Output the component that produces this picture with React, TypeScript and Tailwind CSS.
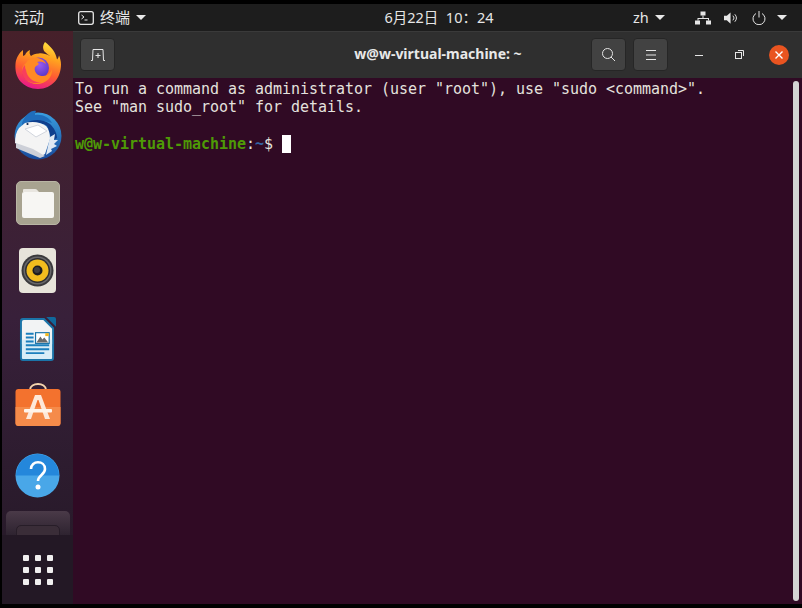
import React from 'react';

const Firefox = () => (
  <svg width="46" height="48" viewBox="0 0 46 48">
    <defs>
      <linearGradient id="ff1" x1="0.7" y1="0" x2="0.4" y2="1">
        <stop offset="0" stopColor="#ffe040" />
        <stop offset="0.3" stopColor="#ffa51f" />
        <stop offset="0.65" stopColor="#ff5a33" />
        <stop offset="1" stopColor="#e8188c" />
      </linearGradient>
      <radialGradient id="ff2" cx="0.55" cy="0.35" r="0.7">
        <stop offset="0" stopColor="#9a5cf0" />
        <stop offset="1" stopColor="#4b2fc0" />
      </radialGradient>
    </defs>
    <path d="M30 1c-3 4-2 8 0 10 2 2 4 3 5 4-4-2-8-3-11-2.500-4 .3-6 1-8 2.500-1-1-2-3-1-6-3 1-4 3-5 5l-2 1C8 13 8 11 8 9 4 12 1 17 .5 23c-.5 7 1 13 5 17.500C9.500 45 16 48 23 48c7 0 13-3 17-7.500 4-4.500 6-11 6-17 0-3-1-7-2-9-.5 2-1 3-2 4-1-7-6-13-12-17.500z" fill="url(#ff1)" />
    <circle cx="23.500" cy="27" r="10.500" fill="url(#ff2)" />
    <path d="M11 22c2-4 7-6 12-5 4 1 7 3 8 6-3-3-7-3-9-2 2 1 2 2 1 3-3 1-4 3-3 6 1 3 4 5 8 5 4 0 8-3 9-7 1 8-6 15-15 15-9 0-15-7-15-14 0-2 1-5 4-7z" fill="#ff8a24" />
    <path d="M11 29c1 8 8 13 15 12-6 3-18 0-19-10 0-3 1-5 3-7 0 2 0 3 1 5z" fill="#f5266f" opacity="0.75" />
  </svg>
);

const Thunderbird = () => (
  <svg width="48" height="50" viewBox="0 0 48 50">
    <defs>
      <linearGradient id="tb1" x1="0.5" y1="0" x2="0.5" y2="1">
        <stop offset="0" stopColor="#3a9fe0" />
        <stop offset="1" stopColor="#174a9c" />
      </linearGradient>
    </defs>
    <circle cx="24" cy="26" r="23.500" fill="url(#tb1)" />
    <path d="M8 13C11 5 17 0 22 1c-1 2-1 3-1 4 7-1 14 2 17 8-6-2-12-3-18-2-5 1-9 2-12 5z" fill="#1f6dbb" />
    <path d="M12 13c7-4 17-4 24 1 4 4 7 9 7 14l-5 3-5-15c-6-4-13-4-21-3z" fill="#0f3f8d" />
    <path d="M5 18l6-5c8-2 15-1 21 3 3 3 4 8 4 13l-5 15-5 3L1 33c0-6 1-11 4-15z" fill="#f4f4f4" />
    <path d="M11 19l13-4 9 6-11 6z" fill="#fff" stroke="#c6ccd6" strokeWidth="0.800" />
    <path d="M2 33l17 6 12 7-5 2L2 38z" fill="#cdd0d8" />
    <path d="M36 27l5-3-1 6 4 0-4 4 3 2-6 3 1 2-6 4z" fill="#dfe8f3" />
    <circle cx="13.500" cy="14" r="1.100" fill="#10284f" />
  </svg>
);

const Files = () => (
  <div className="w-[44px] h-[44px] rounded-[5px] bg-[#a8a390] border border-[#b9b5a4] flex items-center justify-center">
    <svg width="32" height="29" viewBox="0 0 32 29">
      <path d="M2 0h11a3 3 0 0 1 2.400 1.200L17 3H1V1a1 1 0 0 1 1-1z" fill="#e9e6e0" />
      <rect x="0" y="3" width="32" height="26" rx="2" fill="#f7f6f3" />
    </svg>
  </div>
);

const Rhythmbox = () => (
  <div className="w-[37px] h-[45px] rounded-[4px] bg-[#e7e4da] flex items-center justify-center">
    <svg width="33" height="33" viewBox="0 0 33 33">
      <circle cx="16.500" cy="16.500" r="16" fill="#3a3a3c" />
      <circle cx="16.500" cy="16.500" r="14" fill="#68686a" />
      <circle cx="16.500" cy="16.500" r="12.500" fill="#2e2e30" />
      <circle cx="16.500" cy="16.500" r="11" fill="#f2bd1e" />
      <circle cx="16.500" cy="16.500" r="5" fill="#1d1d1f" />
      <circle cx="16" cy="16" r="3" fill="#3e3e40" />
    </svg>
  </div>
);

const Writer = () => (
  <svg width="37" height="45" viewBox="0 0 38 46">
    <path d="M28 0h8a2 2 0 0 1 2 2v8z" fill="#10689c" />
    <path d="M4 1h22l10 10v31a3 3 0 0 1-3 3H4a3 3 0 0 1-3-3V4a3 3 0 0 1 3-3z" fill="#1b74a8" />
    <path d="M5 3h20l9 9v16H3V5a2 2 0 0 1 2-2z" fill="#f2f3f4" />
    <path d="M3 23h31v19a1 1 0 0 1-1 1H4a1 1 0 0 1-1-1z" fill="#d8edf7" />
    <path d="M7 16h8v2H7zM7 20h8v2H7zM7 24h8v2H7zM7 28h24v2H7zM7 32h24v2H7zM7 36h19v2H7z" fill="#1b7fbd" />
    <rect x="17" y="16" width="14" height="11" fill="#fff" stroke="#1b74a8" strokeWidth="1.200" />
    <path d="M18 26l4-6 2 3 2-2 4 5z" fill="#6a6a6a" />
    <rect x="27" y="16.500" width="3.500" height="3" fill="#f5b91c" />
  </svg>
);

const Software = () => (
  <svg width="46" height="43" viewBox="0 0 46 43">
    <path d="M15 7c0-8 16-8 16 0" fill="none" stroke="#f6d5ae" strokeWidth="2" />
    <rect x="0.500" y="6" width="45" height="37" rx="3" fill="#f3722e" />
    <path d="M.5 24h45v16a3 3 0 0 1-3 3h-39a3 3 0 0 1-3-3z" fill="#f58b4a" />
    <path d="M20 12h6l9 24h-5l-6.500-19h-1L16 36h-5z" fill="#fde8d9" />
    <rect x="9" y="26" width="28" height="3.500" rx="1" fill="#fff4ea" />
  </svg>
);

const Help = () => (
  <svg width="45" height="45" viewBox="0 0 45 45">
    <circle cx="22.500" cy="22.500" r="22" fill="#49a7e8" />
    <path d="M22.500 1a21.500 21.500 0 0 1 21.500 21.500H1A21.500 21.500 0 0 1 22.500 1z" fill="#2487db" />
    <path d="M16 16c0-9 14-9 14 0 0 6-7 6-7 12" fill="none" stroke="#fff" strokeWidth="2.600" />
    <circle cx="23" cy="34" r="2.500" fill="#fff" />
  </svg>
);

const Grip = () => (
  <div className="grid grid-cols-3 gap-[6px] self-start">
    {Array.from({ length: 9 }).map((_, i) => (
      <span key={i} className="w-[6px] h-[6px] rounded-[1px] bg-[#f0efef]" />
    ))}
  </div>
);

const HeaderButton = ({ children }: { children: React.ReactNode }) => (
  <div className="w-[35px] h-[33px] rounded-[4px] bg-[#424242] border border-[#262626] flex items-center justify-center">
    {children}
  </div>
);

const Caret = () => <span className="w-0 h-0 border-x-[5px] border-x-transparent border-t-[5px] border-t-[#e8e8e8]" />;

const App = () => {
  return (
    <div className="w-[802px] h-[608px] bg-black pt-[4px] pb-[4px] pl-[2px] flex flex-col overflow-hidden font-['Noto_Sans','Noto_Sans_CJK_SC',sans-serif]">
      {/* top bar */}
      <div className="h-[27px] shrink-0 bg-[#1d1d1d] flex items-center text-[15px] text-[#e6e6e6]">
        <span className="ml-[12px] w-[64px]">活动</span>
        <div className="flex items-center">
          <svg width="16" height="14" viewBox="0 0 16 14" fill="none">
            <rect x="0.700" y="0.700" width="14.600" height="12.600" rx="2" stroke="#e6e6e6" strokeWidth="1.300" />
            <path d="M3.500 4l2.500 2-2.500 2M6.500 9h3" stroke="#e6e6e6" strokeWidth="1" />
          </svg>
          <span className="ml-[6px]">终端</span>
          <span className="ml-[6px] flex"><Caret /></span>
        </div>
        <span className="ml-[236px] w-[114px] text-center text-[14.500px] whitespace-nowrap">6月22日&nbsp;&nbsp;10：24</span>
        <span className="ml-[137px] text-[14.500px]">zh</span>
        <span className="ml-[6px] flex"><Caret /></span>
        <svg className="ml-[30px]" width="16" height="14" viewBox="0 0 16 14" fill="#e6e6e6">
          <rect x="5.500" y="0.500" width="5" height="4" />
          <rect x="0" y="9.500" width="5" height="4" />
          <rect x="11" y="9.500" width="5" height="4" />
          <path d="M7.500 4.500h1v2.500h5.500v2.500h-1V8H3.500v1.500h-1V7h5z" />
        </svg>
        <svg className="ml-[13px]" width="15" height="14" viewBox="0 0 16 14" fill="none">
          <path d="M0 4.500h3L7 1v12L3 9.500H0z" fill="#e6e6e6" />
          <path d="M9.500 4.500a3.500 3.500 0 0 1 0 5M11.500 3a6 6 0 0 1 0 8" stroke="#e6e6e6" strokeWidth="1" />
        </svg>
        <svg className="ml-[13px]" width="14" height="14" viewBox="0 0 14 14" fill="none">
          <path d="M4 2.500a6 6 0 1 0 6 0M7 0v6.500" stroke="#e6e6e6" strokeWidth="1" />
        </svg>
        <span className="ml-[11px] flex"><Caret /></span>
      </div>

      <div className="flex-1 flex min-h-0">
        {/* dock */}
        <div className="w-[71px] shrink-0 flex flex-col items-center bg-gradient-to-b from-[#46202a] via-[#38203a] to-[#231825] pt-[10px]">
          <div className="h-[48px] flex items-center justify-center"><Firefox /></div>
          <div className="h-[50px] mt-[21px] flex items-center justify-center"><Thunderbird /></div>
          <div className="h-[44px] mt-[21px] flex items-center justify-center"><Files /></div>
          <div className="h-[45px] mt-[23px] flex items-center justify-center"><Rhythmbox /></div>
          <div className="h-[45px] mt-[24px] flex items-center justify-center"><Writer /></div>
          <div className="h-[43px] mt-[21px] flex items-center justify-center"><Software /></div>
          <div className="h-[45px] mt-[27px] flex items-center justify-center"><Help /></div>
          <div className="mt-[13px] w-[64px] h-[24px] rounded-t-[5px] bg-gradient-to-b from-[#4a3a48] to-[#2e2330] flex justify-center pt-[14px] overflow-hidden">
            <div className="w-[44px] h-[12px] rounded-t-[5px] border border-[#271d28] bg-[#3a2d38]" />
          </div>
          <div className="flex-1 w-full bg-[#231825] flex justify-center pt-[20px]"><Grip /></div>
        </div>

        {/* terminal window */}
        <div className="flex-1 flex flex-col min-w-0">
          <div className="h-[47px] shrink-0 bg-[#2f2f2f] border-t border-[#3a3a3a] flex items-center pl-[7px] pb-[1px]">
            <HeaderButton>
              <svg width="16" height="14" viewBox="0 0 16 14" fill="none" stroke="#e6e6e6" strokeWidth="1">
                <path d="M1 12.500h1.500L3 1.500h10l.5 11H15M8 5v5M5.500 7.500h5" />
              </svg>
            </HeaderButton>
            <span className="ml-[235px] w-[176px] mb-[3px] text-center text-[14px] font-bold text-[#e8e8e8] font-['Noto_Sans',sans-serif] whitespace-nowrap">w@w-virtual-machine: ~</span>
            <div className="ml-[65px]">
              <HeaderButton>
                <svg width="15" height="15" viewBox="0 0 15 15" fill="none" stroke="#e6e6e6" strokeWidth="1">
                  <circle cx="6.500" cy="6.500" r="5" />
                  <path d="M10 10l4 4" />
                </svg>
              </HeaderButton>
            </div>
            <div className="ml-[7px]">
              <HeaderButton>
                <svg width="12" height="10" viewBox="0 0 12 10" stroke="#e6e6e6" strokeWidth="1">
                  <path d="M1 .500h10M1 5h10M1 9.500h10" />
                </svg>
              </HeaderButton>
            </div>
            <span className="ml-[27px] w-[8px] h-px mt-[2px] bg-[#e6e6e6]" />
            <svg className="ml-[32px] mb-[1px]" width="9" height="9" viewBox="0 0 9 9" fill="none" stroke="#e6e6e6" strokeWidth="1">
              <rect x="0.500" y="2.500" width="6" height="6" />
              <path d="M3 .500h5.500v5.500" />
            </svg>
            <div className="ml-[25px] w-[20px] h-[20px] rounded-full bg-[#e95420] flex items-center justify-center">
              <svg width="8" height="8" viewBox="0 0 8 8" stroke="#fff" strokeWidth="1.400">
                <path d="M.5.500l7 7M7.500.500l-7 7" />
              </svg>
            </div>
          </div>

          <div className="relative flex-1 bg-[#300a24] pl-[2px] pt-[2px] text-[15px] leading-[18.300px] text-[#e4e2de] font-['DejaVu_Sans_Mono',monospace] whitespace-pre tracking-[-0.030px]">
            <div>To run a command as administrator (user "root"), use "sudo &lt;command&gt;".</div>
            <div>See "man sudo_root" for details.</div>
            <div>&nbsp;</div>
            <div className="flex items-center">
              <span className="font-bold text-[#4e9a06]">w@w-virtual-machine</span>
              <span>:</span>
              <span className="font-bold text-[#3465a4]">~</span>
              <span>$ </span>
              <span className="w-[9px] h-[18px] bg-white" />
            </div>
            <div className="absolute right-[3px] top-[3px] w-[6px] h-[520px] rounded-full bg-[#d4d4d4]" />
          </div>
        </div>
      </div>
    </div>
  );
};

export default App;
